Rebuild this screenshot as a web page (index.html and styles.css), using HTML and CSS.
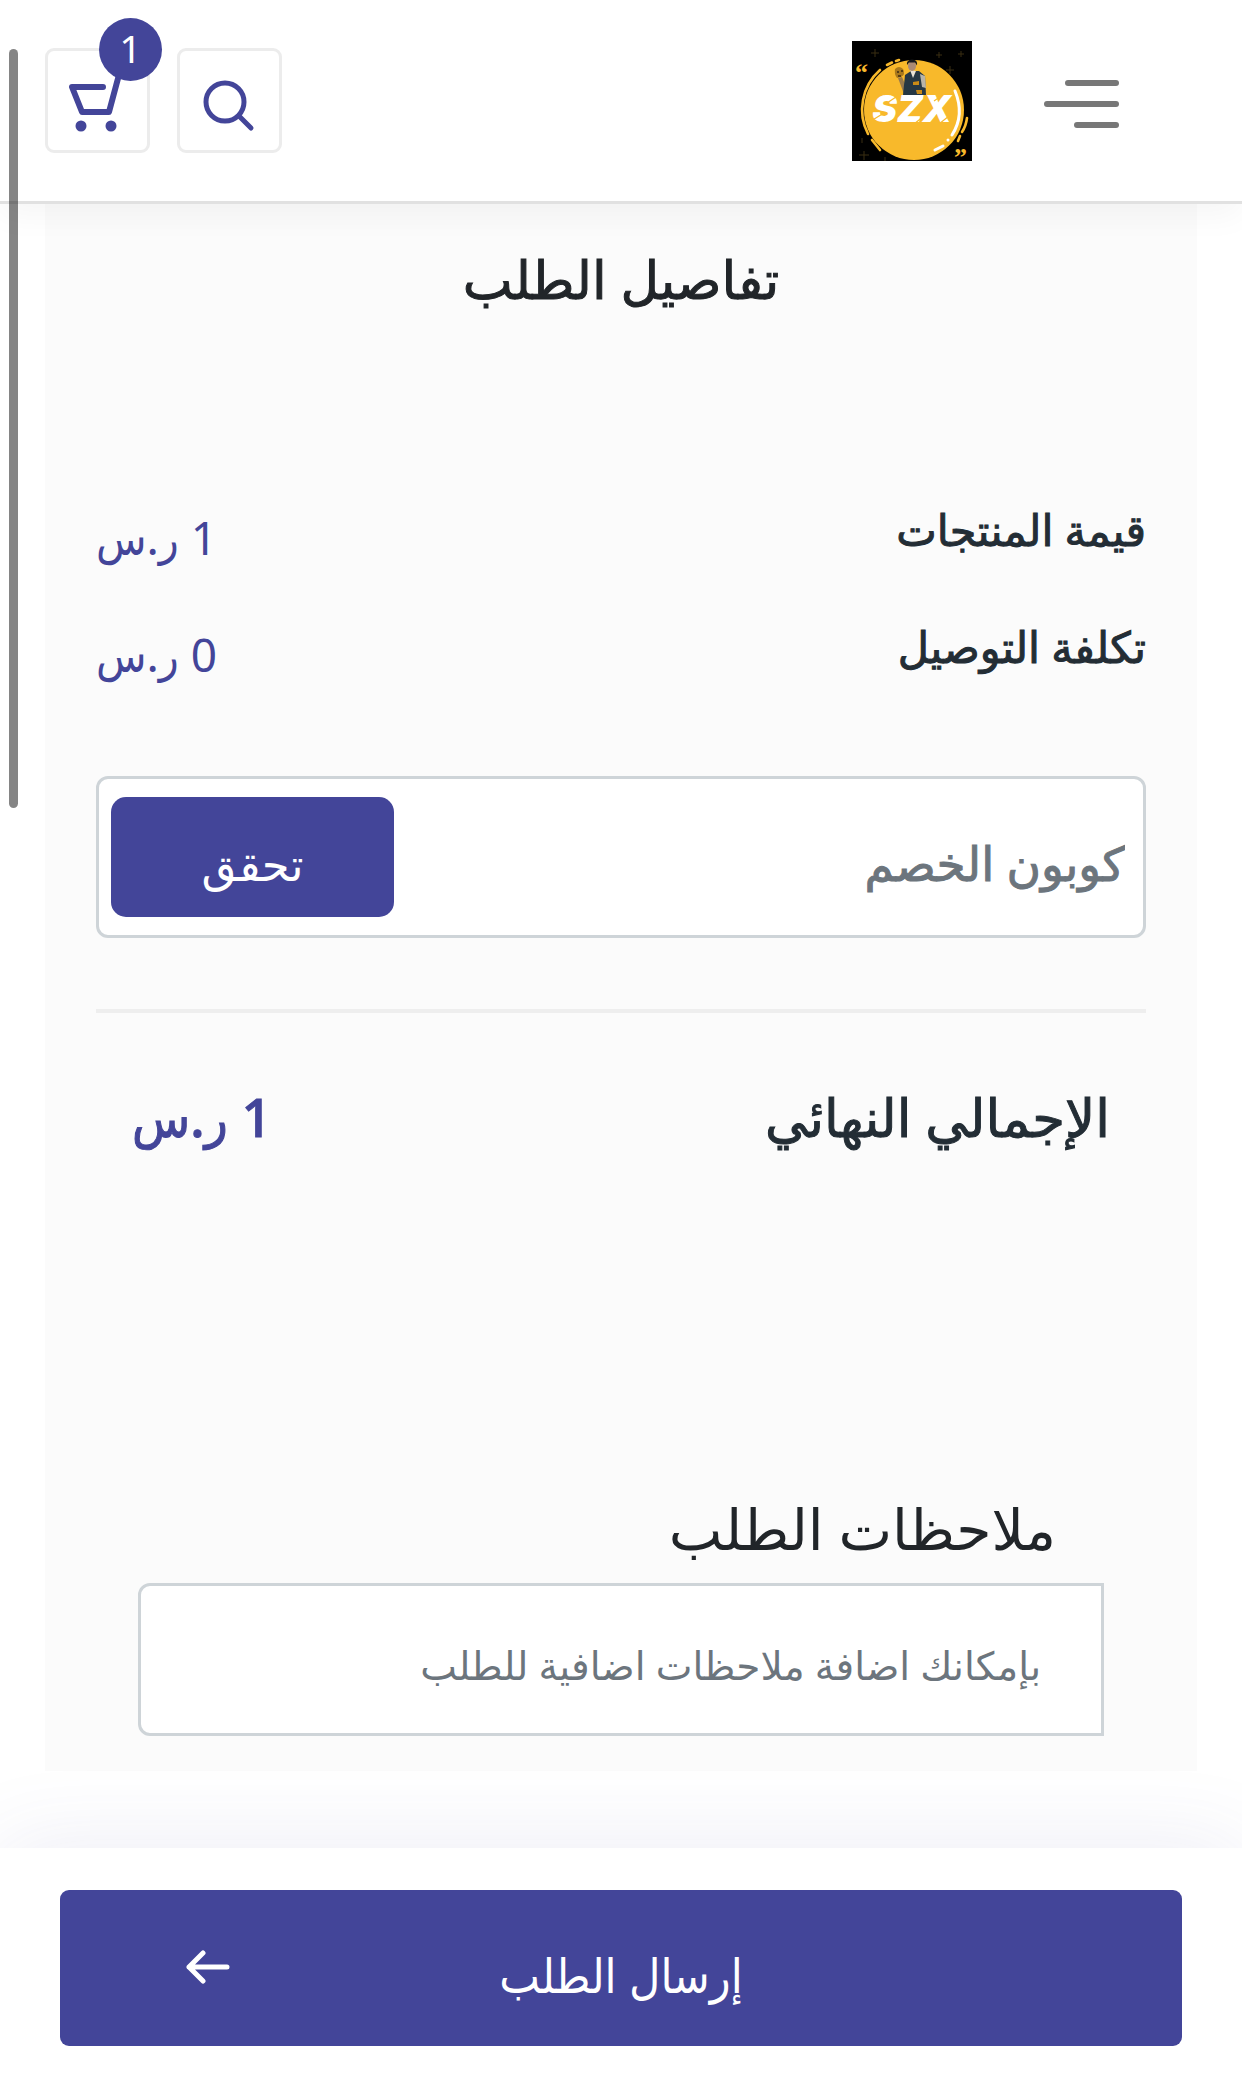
FILE: index.html
```html
<!DOCTYPE html>
<html lang="ar" dir="rtl">
<head>
    <meta charset="UTF-8">
    <meta name="viewport" content="width=device-width, initial-scale=1.0">
    <title>تفاصيل الطلب</title>
    <link rel="stylesheet" href="styles.css">
</head>
<body>

<header class="site-header">
    <button class="menu-button" type="button" aria-label="القائمة">
        <span class="menu-line"></span>
        <span class="menu-line menu-line-long"></span>
        <span class="menu-line menu-line-short"></span>
    </button>
    <a href="#" class="logo" aria-label="SZX">
        <svg viewBox="0 0 120 120" width="120" height="120">
            <rect width="120" height="120" fill="#000"/>
            <!-- faint sparkles -->
            <g stroke="#3a2e12" stroke-width="1">
                <path d="M23 8v8M19 12h8M87 11v6M84 14h6M109 10v6M106 13h6M98 25v8M94 29h8M12 110v9M7 114h10M10 97v5M33 116v4"/>
            </g>
            <circle cx="62" cy="69" r="50" fill="#f8b92b"/>
            <g fill="none" stroke="#f8b92b" stroke-width="2.6" stroke-linecap="round">
                <path d="M28 29A53 53 0 0 0 16 93"/>
                <path d="M20 99l8 10M35 24l5-2.500M44 20l3-1"/>
                <path d="M115 77q-1 8-5 14M108 95l-2 5"/>
            </g>
            <g fill="none" stroke="#fff" stroke-width="3" stroke-linecap="round">
                <path d="M103 50q10 24-3 44"/>
                <path d="M96 99v0M91 105l-8 4"/>
            </g>
            <!-- man holding the skull -->
            <path d="M43 28q4-4 8 0q3 5-2 8l-4 1q-3-4-2-9z" fill="#a9791c"/>
            <path d="M45 31h2M49 30h2M46 35h3" stroke="#3b2a10" stroke-width="1.500"/>
            <path d="M46 37l6 16 4-3-6-14z" fill="#9a7a4a"/>
            <path d="M53 34l6-4 8 0 6 5 1 19H51z" fill="#263743"/>
            <path d="M68 33l5 2 1 12-4-1z" fill="#b9b4a8"/>
            <path d="M58 29l3 8 3-7z" fill="#e9e2d6"/>
            <ellipse cx="60" cy="25" rx="4" ry="5" fill="#a98a76"/>
            <path d="M55 24q-1-5 5-5.500q6 0 5 6l-2-3-6 0z" fill="#16191c"/>
            <path d="M61 41l6-1v4l-6 0zM64 49h6v4h-5z" fill="#c98a17"/>
            <text x="60" y="81" class="logo-text">SZX</text>
            <text x="3" y="40" class="logo-quote">“</text>
            <text x="102" y="125" class="logo-quote">”</text>
            <path d="M14 83l18-11M35 62l12-8M62 83l10-8M82 60l10-7M87 83l10-8" stroke="#f8b92b" stroke-width="1.200"/>
        </svg>
    </a>
    <div class="header-actions">
        <button class="icon-button" type="button" aria-label="بحث">
            <svg viewBox="0 0 52 52" width="52" height="52" fill="none" stroke="#434599" stroke-width="5" stroke-linecap="round">
                <circle cx="21" cy="23" r="19"/>
                <path d="M35 37l12 12"/>
            </svg>
        </button>
        <button class="icon-button" type="button" aria-label="السلة">
            <svg viewBox="0 0 60 60" width="60" height="60" fill="none" stroke="#434599" stroke-width="6" stroke-linecap="round" stroke-linejoin="round">
                <path d="M35 12H4l10 25h27L52 -4"/>
                <circle cx="13" cy="51" r="5.500" fill="#434599" stroke="none"/>
                <circle cx="43" cy="51" r="5.500" fill="#434599" stroke="none"/>
            </svg>
            <span class="cart-badge">1</span>
        </button>
    </div>
</header>

<main class="order-page">
    <section class="order-panel">
        <h1 class="order-title">تفاصيل الطلب</h1>

        <div class="price-row">
            <span class="price-label">قيمة المنتجات</span>
            <span class="price-value">1 ر.س</span>
        </div>
        <div class="price-row">
            <span class="price-label">تكلفة التوصيل</span>
            <span class="price-value">0 ر.س</span>
        </div>

        <form class="coupon-form">
            <input type="text" class="coupon-input" aria-label="كوبون الخصم" placeholder="كوبون الخصم">
            <button type="button" class="coupon-button">تحقق</button>
        </form>

        <hr class="divider">

        <div class="total-row">
            <span class="total-label">الإجمالي النهائي</span>
            <span class="total-value">1 ر.س</span>
        </div>

        <div class="order-notes">
            <label for="orderNotes" class="notes-label">ملاحظات الطلب</label>
            <input type="text" id="orderNotes" class="notes-input" placeholder="بإمكانك اضافة ملاحظات اضافية للطلب">
        </div>
    </section>
</main>

<footer class="submit-bar">
    <button type="button" class="submit-button">
        <span class="submit-text">إرسال الطلب</span>
        <svg class="submit-arrow" viewBox="0 0 44 34" width="44" height="34" fill="none" stroke="#fff" stroke-width="5" stroke-linecap="round" stroke-linejoin="round">
            <path d="M41 17H3M17 3L3 17l14 14"/>
        </svg>
    </button>
</footer>

<div class="scroll-thumb"></div>

</body>
</html>
```
FILE: styles.css
```css
* {
    box-sizing: border-box;
}

body {
    margin: 0;
    min-height: 100vh;
    display: flex;
    flex-direction: column;
    background: #fff;
    color: #212529;
    font-family: "Noto Sans", "DejaVu Sans", sans-serif;
}

button, input {
    font-family: inherit;
    margin: 0;
}

button {
    cursor: pointer;
}

/* Header */
.site-header {
    position: relative;
    z-index: 2;
    display: flex;
    align-items: center;
    height: 204px;
    padding: 0 45px;
    background: #fff;
    border-bottom: 3px solid #e1e1e1;
    box-shadow: 0 12px 30px rgba(0, 0, 0, 0.04);
}

.menu-button {
    display: flex;
    flex-direction: column;
    gap: 15px;
    margin-top: 6px;
    padding: 0;
    margin-right: 78px;
    width: 75px;
    background: none;
    border: none;
}

.menu-line {
    width: 54px;
    height: 6px;
    border-radius: 3px;
    background: #777;
}

.menu-line-long {
    width: 75px;
}

.menu-line-short {
    width: 45px;
}

.logo {
    margin-right: 72px;
    height: 120px;
}

.logo svg {
    overflow: visible;
}

.logo-text {
    font: italic 900 37px Inter, sans-serif;
    fill: #fff;
    text-anchor: middle;
    direction: ltr;
}

.logo-quote {
    font: bold 26px "Liberation Serif", serif;
    fill: #f8b92b;
    direction: ltr;
}

.header-actions {
    display: flex;
    gap: 27px;
    margin-right: auto;
}

.icon-button {
    position: relative;
    display: flex;
    align-items: center;
    justify-content: center;
    width: 105px;
    height: 105px;
    padding: 8px 0 0;
    background: #fff;
    border: 3px solid #ececec;
    border-radius: 9px;
}

.icon-button svg {
    overflow: visible;
}

.cart-badge {
    position: absolute;
    top: -33px;
    right: -15px;
    width: 63px;
    height: 63px;
    line-height: 60px;
    border-radius: 50%;
    background: #434599;
    color: #fff;
    font-size: 39px;
    text-align: center;
}

/* Order panel */
.order-page {
    flex: 1;
    padding: 0 45px 77px;
}

.order-panel {
    padding: 33px 51px 35px;
    background: #fbfbfb;
}

/* medium weight for the headings and labels */
.order-title, .price-label, .total-label, .total-value, .coupon-input::placeholder {
    -webkit-text-stroke: 1px currentColor;
}

.order-title {
    margin: 0 0 159px;
    font-size: 53px;
    font-weight: 500;
    line-height: 84px;
    text-align: center;
}

.price-row {
    display: flex;
    justify-content: space-between;
    height: 117px;
}

.price-label {
    color: #232d35;
    font-size: 43px;
    line-height: 99px;
}

.price-value {
    color: #434599;
    font-family: "Noto Sans", "DejaVu Sans Condensed", sans-serif;
    font-size: 46px;
    line-height: 114px;
}

.coupon-form {
    display: flex;
    margin-top: 62px;
    padding: 18px 12px;
    background: #fff;
    border: 3px solid #ced4d8;
    border-radius: 12px;
}

.coupon-input {
    flex: 1;
    min-width: 0;
    padding: 12px 6px 0;
    background: none;
    border: none;
    font-size: 47px;
}

.coupon-input::placeholder, .notes-input::placeholder {
    color: #6c757d;
    opacity: 1;
}

.coupon-button {
    width: 283px;
    height: 120px;
    padding: 12px 0 0;
    background: #434599;
    color: #fff;
    border: none;
    border-radius: 15px;
    font-size: 45px;
}

.divider {
    height: 4px;
    margin: 71px 0 44px;
    background: #eee;
    border: none;
}

.total-row {
    display: flex;
    justify-content: space-between;
    padding: 0 36px;
    font-size: 53px;
    line-height: 120px;
}

.total-label {
    color: #232d35;
}

.total-value {
    color: #434599;
    font-family: "Noto Sans", "DejaVu Sans Condensed", sans-serif;
    font-weight: 500;
}

/* Notes */
.order-notes {
    display: flex;
    flex-direction: column;
    margin-top: 315px;
    padding: 0 42px;
}

.notes-label {
    padding: 0 48px;
    font-size: 57px;
    line-height: 72px;
}

.notes-input {
    width: 100%;
    height: 153px;
    margin-top: 19px;
    padding: 9px 60px 0;
    background: #fff;
    border: 3px solid #ced4d8;
    border-radius: 12px 0 0 12px;
    font-size: 39px;
}

/* Bottom bar */
.submit-bar {
    position: relative;
    padding: 42px 60px;
    background: #fff;
    box-shadow: 0 0 90px rgba(67, 69, 153, 0.1);
}

.submit-button {
    position: relative;
    width: 100%;
    height: 156px;
    padding: 12px 0 0;
    background: #434599;
    color: #fff;
    border: none;
    border-radius: 9px;
    font-family: "Noto Sans", "DejaVu Sans Condensed", sans-serif;
    font-size: 48px;
}

.submit-arrow {
    position: absolute;
    left: 126px;
    top: 60px;
}

.scroll-thumb {
    position: fixed;
    z-index: 3;
    top: 49px;
    left: 9px;
    width: 9px;
    height: 759px;
    border-radius: 5px;
    background: rgba(0, 0, 0, 0.48);
}
```
